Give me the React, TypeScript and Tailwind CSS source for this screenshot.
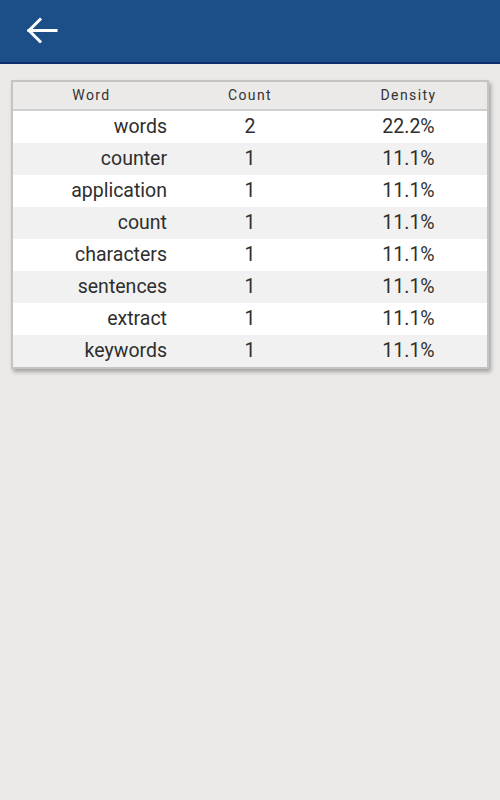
import React from 'react';

const rows = [
  { word: 'words', count: 2, density: '22.2%' },
  { word: 'counter', count: 1, density: '11.1%' },
  { word: 'application', count: 1, density: '11.1%' },
  { word: 'count', count: 1, density: '11.1%' },
  { word: 'characters', count: 1, density: '11.1%' },
  { word: 'sentences', count: 1, density: '11.1%' },
  { word: 'extract', count: 1, density: '11.1%' },
  { word: 'keywords', count: 1, density: '11.1%' },
];

export default function App() {
  return (
    <div
      className="min-h-[800px] w-[500px] bg-[#ebeae8]"
      style={{ fontFamily: 'Roboto, "Liberation Sans", sans-serif' }}
    >
      <div className="h-[64px] bg-[#1c4f87] border-b-2 border-[#0f2f6c] flex items-center pl-[26px]">
        <svg width="32" height="28" viewBox="0 0 32 28" fill="none" stroke="white" strokeWidth="3" strokeLinecap="square">
          <path d="M3 13.5H30" />
          <path d="M14 2.5L3 13.5L14 24.5" />
        </svg>
      </div>

      <div className="mx-[11px] mt-[16px] border-2 border-[#c4c4c4] bg-white shadow-[2px_3px_4px_rgba(0,0,0,0.3)]">
        <div className="grid grid-cols-[157px_160px_1fr] h-[29px] bg-[#ebeae8] border-b-2 border-[#cfcfcf] text-[14px] text-[#333] tracking-[0.1em] items-center">
          <div className="text-center">Word</div>
          <div className="text-center">Count</div>
          <div className="text-center">Density</div>
        </div>
        {rows.map((r, i) => (
          <div
            key={r.word}
            className={`grid grid-cols-[157px_160px_1fr] h-[32px] items-center text-[19.5px] text-[#2e2e2e] ${
              i % 2 === 0 ? 'bg-white' : 'bg-[#f1f1f1]'
            }`}
          >
            <div className="text-right pr-[3px]">{r.word}</div>
            <div className="text-center">{r.count}</div>
            <div className="text-center">{r.density}</div>
          </div>
        ))}
      </div>
    </div>
  );
}
